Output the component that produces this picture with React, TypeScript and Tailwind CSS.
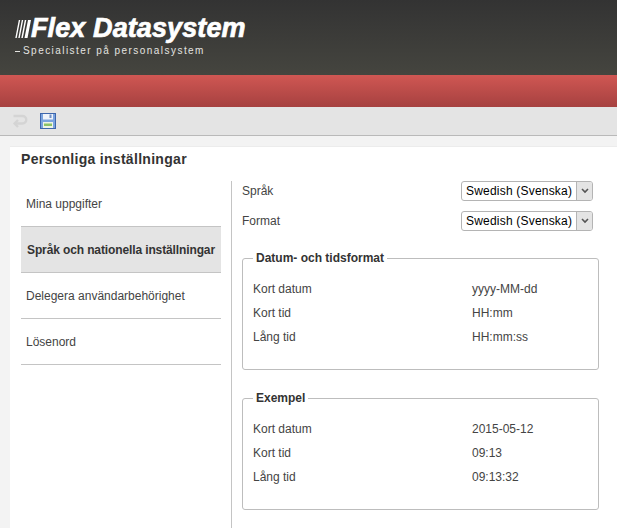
const menu = [
  { label: 'Mina uppgifter' },
  { label: 'Språk och nationella inställningar', active: true },
  { label: 'Delegera användarbehörighet' },
  { label: 'Lösenord' },
]

const formats = [
  { label: 'Kort datum', value: 'yyyy-MM-dd' },
  { label: 'Kort tid', value: 'HH:mm' },
  { label: 'Lång tid', value: 'HH:mm:ss' },
]

const examples = [
  { label: 'Kort datum', value: '2015-05-12' },
  { label: 'Kort tid', value: '09:13' },
  { label: 'Lång tid', value: '09:13:32' },
]

function Logo() {
  return (
    <div className="pt-[17px] pl-[15px] text-white">
      <div className="flex items-center h-[23px]">
        <svg width="16" height="20" viewBox="0 0 16 20" className="shrink-0">
          <path d="M3.800 1h1.400L1.700 19H.300zM6.800 1h1.400L4.700 19H3.300zM9.800 1h1.500L7.800 19H6.300zM13 1h3l-3.500 18h-3z" fill="#fff" />
        </svg>
        <span className="text-[27px] leading-none font-bold italic tracking-[0.1px] [-webkit-text-stroke:0.7px_white]">
          Flex Datasystem
        </span>
      </div>
      <div className="flex items-center mt-1 text-[10px] leading-[14px] tracking-[1.45px] text-[#e4e4e0]">
        <span className="w-[5px] h-px bg-[#e4e4e0] mr-[3px]" />
        Specialister på personalsystem
      </div>
    </div>
  )
}

function UndoIcon() {
  return (
    <svg width="16" height="16" viewBox="0 0 16 16" fill="none" stroke="#d4d4d4" strokeWidth="2.400">
      <path d="M1.500 3h9a3.200 3.200 0 0 1 0 7.500H3" />
      <path d="M6 7 2.600 10.500 6 14" />
    </svg>
  )
}

function SaveIcon() {
  return (
    <svg width="16" height="16" viewBox="0 0 16 16">
      <rect x="0.500" y="0.500" width="15" height="15" fill="#7aa3df" stroke="#3d66ac" />
      <rect x="3" y="1" width="10" height="5.500" fill="#eef3fa" />
      <rect x="9.500" y="1.500" width="2" height="3.500" fill="#6f8fc4" />
      <rect x="3" y="9" width="10" height="6" fill="#eef4e6" />
      <rect x="4" y="10.500" width="8" height="2.500" fill="#8cc267" />
    </svg>
  )
}

function SelectBox() {
  return (
    <div className="flex w-[132px] h-5 rounded-[3px] border border-[#b4b4b4] bg-white overflow-hidden">
      <span className="flex-1 pl-1 text-[12px] leading-[18px] tracking-[0.2px] text-black">Swedish (Svenska)</span>
      <span className="flex w-4 items-center justify-center border-l border-[#b4b4b4] bg-[#e4e4e4]">
        <svg width="8" height="6" viewBox="0 0 8 6" fill="none" stroke="#555" strokeWidth="1.600">
          <path d="M1 1l3 3 3-3" />
        </svg>
      </span>
    </div>
  )
}

function FormatBox({ title, rows }: { title: string; rows: { label: string; value: string }[] }) {
  return (
    <fieldset className="h-[119px] w-[357px] rounded-[3px] border border-[#bdbdbd] px-[10px]">
      <legend className="px-[3px] text-[12px] leading-[14px] font-bold text-[#333]">{title}</legend>
      <div className="pt-3">
        {rows.map(r => (
          <div key={r.label} className="flex h-6 items-center text-[12px] text-[#444]">
            <span className="w-[219px] shrink-0">{r.label}</span>
            <span>{r.value}</span>
          </div>
        ))}
      </div>
    </fieldset>
  )
}

export default function App() {
  return (
    <div className="h-[528px] w-[617px] overflow-hidden bg-[#f3f3f3] font-['Liberation_Sans',Arial,sans-serif]">
      <header className="h-[75px] bg-gradient-to-b from-[#333333] to-[#45453f]">
        <Logo />
      </header>
      <div className="h-[32px] bg-gradient-to-b from-[#d05753] to-[#a64140]" />
      <div className="flex h-[29px] items-center gap-[12px] border-b border-[#b9b9b9] bg-[#e4e4e4] pl-3 pb-px">
        <UndoIcon />
        <SaveIcon />
      </div>
      <main className="ml-[10px] mt-[10px] h-[382px] bg-white border-t border-[#ececec]">
        <h1 className="pl-[11px] pt-[3px] text-[14px] leading-[18px] font-bold tracking-[0.3px] text-[#333]">
          Personliga inställningar
        </h1>
        <div className="flex mt-[13px] pl-[11px]">
          <nav className="w-[200px] shrink-0">
            {menu.map(m => (
              <div
                key={m.label}
                className={`flex h-[46px] items-center border-b border-[#c4c4c4] text-[12px] ${
                  m.active ? 'bg-[#e4e4e4] pl-1.5 font-bold tracking-[-0.12px] text-[#333]' : 'pl-[5px] text-[#444]'
                }`}
              >
                {m.label}
              </div>
            ))}
          </nav>
          <section className="ml-[10px] h-[400px] border-l border-[#c4c4c4] pl-[10px]">
            <div className="flex h-[19px] items-center justify-between w-[351px] text-[12px] text-[#444]">
              <span>Språk</span>
              <SelectBox />
            </div>
            <div className="flex h-[19px] items-center justify-between w-[351px] mt-[11px] text-[12px] text-[#444]">
              <span>Format</span>
              <SelectBox />
            </div>
            <div className="mt-[21px] flex flex-col gap-[21px]">
              <FormatBox title="Datum- och tidsformat" rows={formats} />
              <FormatBox title="Exempel" rows={examples} />
            </div>
          </section>
        </div>
      </main>
    </div>
  )
}
